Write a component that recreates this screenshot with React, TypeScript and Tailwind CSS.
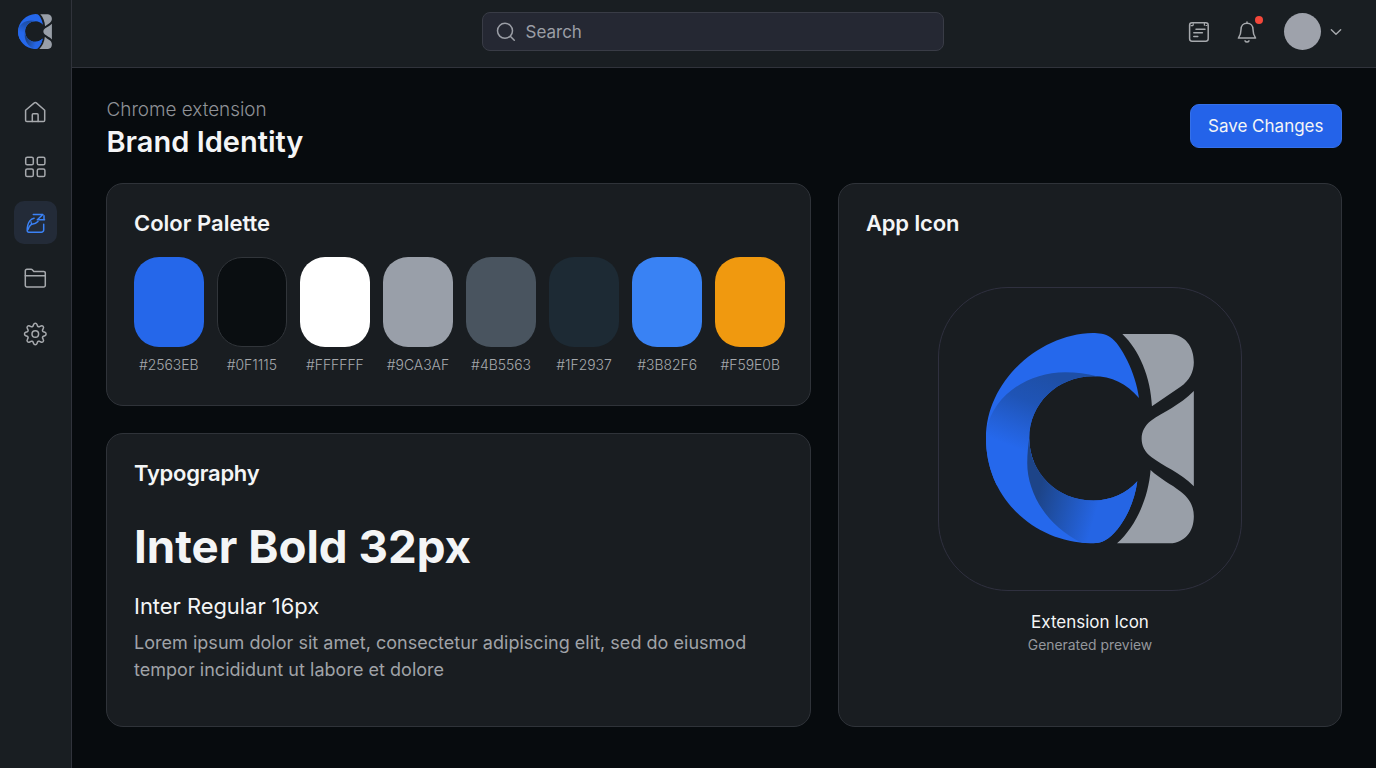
import type { ReactNode } from "react";

const swatches = [
  { hex: "#2563EB", box: "bg-[#2567ea]" },
  { hex: "#0F1115", box: "bg-[#0a0e11] border border-[#31353a]" },
  { hex: "#FFFFFF", box: "bg-white" },
  { hex: "#9CA3AF", box: "bg-[#999fa9]" },
  { hex: "#4B5563", box: "bg-[#49545f]" },
  { hex: "#1F2937", box: "bg-[#1d2a34]" },
  { hex: "#3B82F6", box: "bg-[#3982f4]" },
  { hex: "#F59E0B", box: "bg-[#f0990f]" },
];

const crescent =
  "M627 354C618 280 572 190 541 171C526 160 505 158 488 158C330 161 167 300 167 475C167 655 310 788 482 792C505 792 520 788 536 776C575 745 612 680 622 605C590 640 545 663 490 663C380 663 297 578 297 475C297 372 380 288 490 288C545 288 590 310 627 354Z";

function Logo({ id, className }: { id: string; className: string }) {
  return (
    <svg viewBox="167 158 627 636" className={className} preserveAspectRatio="none" aria-hidden="true">
      <defs>
        <linearGradient id={`${id}-upper`} gradientUnits="userSpaceOnUse" x1="360" y1="285" x2="270" y2="510">
          <stop offset="0" stopColor="#1e4fa6" />
          <stop offset="0.4" stopColor="#1f54b6" />
          <stop offset="0.75" stopColor="#2360d6" />
          <stop offset="1" stopColor="#2568ec" />
        </linearGradient>
        <linearGradient id={`${id}-lower`} gradientUnits="userSpaceOnUse" x1="325" y1="640" x2="500" y2="690">
          <stop offset="0" stopColor="#1d4488" />
          <stop offset="0.35" stopColor="#1f50a8" />
          <stop offset="1" stopColor="#2565e4" />
        </linearGradient>
        <clipPath id={`${id}-clip`}>
          <path d={crescent} />
        </clipPath>
      </defs>
      <path fill="#2568ec" d={crescent} />
      <g clipPath={`url(#${id}-clip)`}>
        <path
          fill={`url(#${id}-upper)`}
          d="M170 450C185 350 290 276 405 276C440 276 470 280 500 288L400 480L300 560L260 640L150 600Z"
        />
        <path
          fill={`url(#${id}-lower)`}
          d="M297 475L420 560L640 590L600 800H480L455 790C350 740 291 640 291 550C291 520 294 495 297 475Z"
        />
      </g>
      <path fill="#999fa8" d="M577 161H720C765 163 792 198 792 246C792 275 778 302 752 320L666 379C662 290 628 210 577 161Z" />
      <path fill="#999fa8" d="M792 333V620C750 578 700 560 664 532C644 516 635 498 635 477C635 455 645 436 664 422C700 396 750 376 792 333Z" />
      <path fill="#999fa8" d="M662 571C690 598 725 614 752 636C778 656 792 680 792 710C792 757 765 789 720 792H561C615 744 655 660 662 571Z" />
    </svg>
  );
}

function Icon({ children, className }: { children: ReactNode; className: string }) {
  return (
    <svg
      viewBox="0 0 24 24"
      className={className}
      fill="none"
      stroke="currentColor"
      strokeWidth="1.5"
      strokeLinecap="round"
      strokeLinejoin="round"
      aria-hidden="true"
    >
      {children}
    </svg>
  );
}

function NavItem({ active, children }: { active?: boolean; children: ReactNode }) {
  return (
    <a
      className={
        active
          ? "flex size-[43px] items-center justify-center rounded-[10px] bg-[#232b38] text-[#3b82f6]"
          : "flex size-[43px] items-center justify-center rounded-[10px] text-[#a6a9ad]"
      }
    >
      <Icon className="size-6">{children}</Icon>
    </a>
  );
}

function Sidebar() {
  return (
    <aside className="flex w-[72px] shrink-0 flex-col items-center border-r border-[#30333b] bg-[#191e22] pr-px">
      <div className="flex h-[90px] items-start pt-[14px]">
        <Logo id="mark" className="h-[35px] w-[34px]" />
      </div>
      <nav className="flex flex-col gap-[12.5px]">
        <NavItem>
          <path d="M2.600 10.300 11.300 2.900a1.500 1.500 0 0 1 2 0l8.400 7.300v10a1.300 1.300 0 0 1-1.300 1.300H3.900a1.300 1.300 0 0 1-1.300-1.300Z" />
          <path d="M9.300 21.400v-6.600a1 1 0 0 1 1-1h3.800a1 1 0 0 1 1 1v6.600" />
        </NavItem>
        <NavItem>
          <rect x="2.700" y="2.200" width="7.600" height="7.600" rx="1.600" />
          <rect x="14.300" y="2.200" width="7.600" height="7.600" rx="1.600" />
          <rect x="2.700" y="14" width="7.600" height="7.600" rx="1.600" />
          <rect x="14.300" y="14" width="7.600" height="7.600" rx="1.600" />
        </NavItem>
        <NavItem active>
          <path d="M20.700 13.200v5.700a2.300 2.300 0 0 1-2.300 2.300H5.700a1.500 1.500 0 0 1-1.500-1.500c0-4.200.6-7.300 2.600-9.800 1.200-1.500 2.500-2.300 4.300-2.700" />
          <path d="M10.300 3.500h9.600l-5.600 5.300h7.200M21 4.800v4" />
          <path d="M5 18.400c.9-2.400 1.900-3.900 3.600-5.200 2.500.1 4.600-.8 6.400-2.700" />
          <path d="M8 10.500c.2 1.100.4 1.900.6 2.700" strokeWidth="1.200" />
        </NavItem>
        <NavItem>
          <path d="M2.300 19.300V4.900a1.600 1.600 0 0 1 1.600-1.600h4.200c.5 0 .9.200 1.200.5l1.500 1.600h9.900A1.600 1.600 0 0 1 22.300 7v12.300a1.600 1.600 0 0 1-1.600 1.600H3.900a1.600 1.600 0 0 1-1.600-1.600Z" />
          <path d="M2.300 9.800h20" />
        </NavItem>
        <NavItem>
          <g transform="translate(.3 0)">
            <circle cx="12" cy="12" r="3.300" />
            <path d="M10.300 2.400a1.800 1.800 0 0 1 3.400 0l.5 1.500a1.500 1.500 0 0 0 2 .8l1.400-.7a1.750 1.750 0 0 1 2.400 2.400l-.7 1.400a1.500 1.500 0 0 0 .8 2l1.500.5a1.800 1.800 0 0 1 0 3.400l-1.500.5a1.500 1.500 0 0 0-.8 2l.7 1.400a1.750 1.750 0 0 1-2.400 2.400l-1.400-.7a1.500 1.500 0 0 0-2 .8l-.5 1.500a1.800 1.800 0 0 1-3.400 0l-.5-1.500a1.500 1.500 0 0 0-2-.8l-1.400.7A1.750 1.750 0 0 1 4 17.600l.7-1.400a1.500 1.500 0 0 0-.8-2l-1.500-.5a1.800 1.800 0 0 1 0-3.400l1.500-.5a1.500 1.500 0 0 0 .8-2L4 6.400A1.750 1.750 0 0 1 6.400 4l1.400.7a1.500 1.500 0 0 0 2-.8Z" />
          </g>
        </NavItem>
      </nav>
    </aside>
  );
}

function Header() {
  return (
    <header className="flex h-[68px] shrink-0 items-start border-b border-[#30333b] bg-[#191e22]">
      <div className="ml-[410px] mt-[12px] flex h-[39px] w-[462px] items-center rounded-[8px] border border-[#393c46] bg-[#252833] pl-[11px] text-[#9b9ea6]">
        <Icon className="size-6">
          <circle cx="11" cy="10.800" r="7.500" />
          <path d="m16.500 16.500 3.800 3.800" />
        </Icon>
        <span className="ml-[7.5px] text-[17px] leading-6">Search</span>
      </div>
      <div className="ml-auto mr-[33px] mt-[13px] flex h-[37px] items-center text-[#a6a9ad]">
        <Icon className="size-6">
          <rect x="2.600" y="2.800" width="18.600" height="18.400" rx="2.400" />
          <path d="M6.200 3.600v1.600M17.400 3.400v1.800M4 5.700h1.500M19 5.500h1" strokeWidth="1.200" />
          <path d="M9 9.200h9M6.800 12.700h8.600M6.800 16.400h4" />
        </Icon>
        <div className="relative ml-6">
          <Icon className="size-6">
            <path d="M12 2v1.300M12 3.300c-3.800 0-6 2.700-6 6.200 0 4.500-1.200 6.700-2.600 8.600h17.200c-1.400-1.900-2.600-4.100-2.600-8.600 0-3.500-2.200-6.200-6-6.200Z" />
            <path d="M10 20.900c.5.900 1.200 1.200 2 1.200s1.500-.3 2-1.200" />
          </Icon>
          <span className="absolute -top-[4px] left-[20px] size-[8px] rounded-full bg-[#f4473a]" />
        </div>
        <span className="ml-[25px] size-[37px] rounded-full bg-[#9ea2ab]" />
        <Icon className="ml-[8px] size-[14px]">
          <path d="M4 8 12 16 20 8" strokeWidth="2.400" />
        </Icon>
      </div>
    </header>
  );
}

const card = "rounded-[17px] border border-[#2f3339] bg-[#191d21]";

export default function App() {
  return (
    <div className="flex h-[768px] w-[1376px] overflow-hidden bg-[#070b0e] font-['Inter',sans-serif] text-[#f4f5f6]">
      <Sidebar />
      <div className="flex min-w-0 flex-1 flex-col">
        <Header />
        <main className="flex flex-1 flex-col pl-[34px] pr-[34px]">
          <div className="flex h-[115px] items-start justify-between">
            <div className="pl-[0.5px] pt-[30px]">
              <p className="text-[18.900px] font-[350] leading-6 text-[#8f9297]">Chrome extension</p>
              <h1 className="mt-[2px] text-[29px] font-semibold leading-9">Brand Identity</h1>
            </div>
            <button className="mt-[35.500px] h-[44px] w-[152.500px] rounded-[9px] border border-[#3570e8] bg-[#2463e9] pt-[1.5px] text-[17px]">
              Save Changes
            </button>
          </div>
          <div className="flex h-[544px] gap-[27px]">
            <div className="flex w-[705px] flex-col gap-[27px]">
              <section className={`${card} h-[223px] pl-[27px] pr-[25px] pt-[23px]`}>
                <h2 className="text-[22px] font-semibold leading-8">Color Palette</h2>
                <ul className="mt-[18px] flex justify-between">
                  {swatches.map((s) => (
                    <li key={s.hex} className="flex w-[69.500px] flex-col items-center">
                      <div className={`h-[90px] w-full rounded-[25px] ${s.box}`} />
                      <span className="mt-[8px] text-[13.900px] font-[350] leading-5 text-[#a6a9ad]">{s.hex}</span>
                    </li>
                  ))}
                </ul>
              </section>
              <section className={`${card} h-[294px] px-[27px] pt-[23px]`}>
                <h2 className="text-[22px] font-semibold leading-8 tracking-[-0.25px]">Typography</h2>
                <p className="mt-[30px] text-[45.700px] font-bold leading-[56px]">Inter Bold 32px</p>
                <p className="mt-[14.5px] text-[21.900px] leading-8">Inter Regular 16px</p>
                <p className="mt-[7.5px] text-[18px] leading-[27px] tracking-[0.025px] text-[#a0a3a8]">
                  Lorem ipsum dolor sit amet, consectetur adipiscing elit, sed do eiusmod
                  <br />
                  tempor incididunt ut labore et dolore
                </p>
              </section>
            </div>
            <section className={`${card} flex flex-1 flex-col items-center px-[27px] pt-[23px]`}>
              <h2 className="self-start text-[22px] font-semibold leading-8 tracking-[-0.2px]">App Icon</h2>
              <div className="mt-[48px] flex size-[304px] items-center justify-center rounded-[70px] border border-[#2f303f] bg-[#191d21] pb-px">
                <Logo id="preview" className="h-[211px] w-[208.500px]" />
              </div>
              <p className="mt-[19px] text-[17px] leading-6">Extension Icon</p>
              <p className="-mt-px text-[13.900px] leading-6 text-[#94979c]">Generated preview</p>
            </section>
          </div>
        </main>
      </div>
    </div>
  );
}
